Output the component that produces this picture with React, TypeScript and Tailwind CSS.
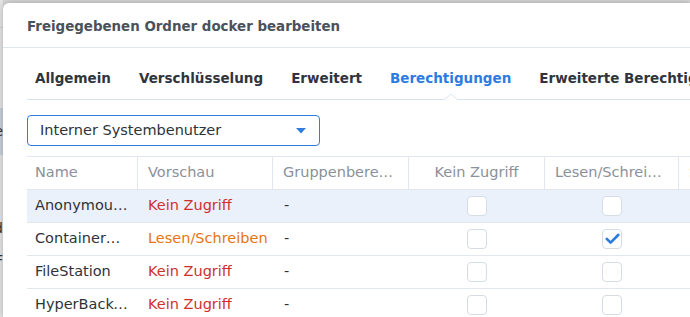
import React from 'react';

const rows = [
  { name: 'AnonymousWebUser', preview: 'Kein Zugriff', tone: 'red', none: false, rw: false, active: true },
  { name: 'ContainerManager', preview: 'Lesen/Schreiben', tone: 'orange', none: false, rw: true, active: false },
  { name: 'FileStation', preview: 'Kein Zugriff', tone: 'red', none: false, rw: false, active: false },
  { name: 'HyperBackupVault', preview: 'Kein Zugriff', tone: 'red', none: false, rw: false, active: false },
];

const tabs = ['Allgemein', 'Verschlüsselung', 'Erweitert', 'Berechtigungen', 'Erweiterte Berechtigungen'];

function Checkbox({ checked }: { checked: boolean }) {
  return (
    <div className="w-[20px] h-[20px] rounded-[4px] border border-[#d5dce5] bg-white flex items-center justify-center">
      {checked && (
        <svg width="15" height="12" viewBox="0 0 15 12">
          <path d="M1.8 5.8 L5.6 9.6 L13.2 2" fill="none" stroke="#2a7ae2" strokeWidth="2.6" strokeLinecap="round" strokeLinejoin="round" />
        </svg>
      )}
    </div>
  );
}

export default function App() {
  return (
    <div className="w-[690px] h-[317px] overflow-hidden flex bg-[#d6d6d6] font-['DejaVu_Sans',sans-serif]">
      {/* window behind the dialog */}
      <div className="w-[3px] shrink-0 flex flex-col bg-[#e4e4e4] text-[14px] text-[#333] overflow-hidden">
        <div className="h-[28px] border-b border-[#cfcfcf]" />
        <div className="h-[80px]" />
        <div className="h-[47px] bg-[#c9d0da] flex items-center justify-end">e</div>
        <div className="h-[58px]" />
        <div className="h-[30px] flex items-center justify-end">d</div>
        <div className="h-[34px] flex items-center justify-end">F</div>
      </div>

      <div className="flex-1 mt-[3px] bg-white rounded-tl-[6px] shadow-[0_0_6px_rgba(0,0,0,0.25)] flex flex-col min-w-0">
        <div className="h-[45px] shrink-0 pl-[24px] pt-[5px] flex items-center border-b border-[#dfe6ef] text-[13.4px] font-bold text-[#4b515a] whitespace-nowrap">
          Freigegebenen Ordner docker bearbeiten
        </div>

        <div className="pl-[24px] flex flex-col min-w-0">
          <div className="flex gap-[28px] pl-[8px] pt-[22px] pb-[13px] border-b border-[#dbe3ec] whitespace-nowrap text-[13.5px] font-bold leading-[16px]">
            {tabs.map((t) => (
              <div key={t} className={`relative ${t === 'Berechtigungen' ? 'text-[#2d7be2]' : 'text-[#2f353d]'}`}>
                {t}
                {t === 'Berechtigungen' && (
                  <svg className="absolute left-1/2 -translate-x-1/2 top-[24px]" width="14" height="6" viewBox="0 0 14 6">
                    <path d="M0 6 L7 0 L14 6" fill="white" stroke="#dbe3ec" strokeWidth="1" />
                  </svg>
                )}
              </div>
            ))}
          </div>

          <div className="mt-[15px] w-[293px] h-[31px] rounded-[4px] border border-[#2f7de1] flex items-center justify-between pl-[12px] pr-[13px] text-[14.5px] text-[#2e3338]">
            <span>Interner Systembenutzer</span>
            <svg width="10" height="6" viewBox="0 0 10 6">
              <path d="M0 0 H10 L5 5.5 Z" fill="#2f7de1" />
            </svg>
          </div>

          <div className="mt-[10px] border-t border-[#e1e7ee] text-[14.5px]">
            <div className="grid grid-cols-[111px_135px_136px_136px_134px_134px] h-[33px] border-b border-[#e1e7ee] text-[#8a919a]">
              <div className="flex items-center pl-[8px] border-r border-[#e1e7ee]">Name</div>
              <div className="flex items-center pl-[10px] border-r border-[#e1e7ee]">Vorschau</div>
              <div className="flex items-center px-[10px] border-r border-[#e1e7ee] min-w-0"><span className="truncate">Gruppenberechtigungen</span></div>
              <div className="flex items-center justify-center px-[10px] border-r border-[#e1e7ee]">Kein Zugriff</div>
              <div className="flex items-center justify-center px-[10px] border-r border-[#e1e7ee] min-w-0"><span className="truncate">Lesen/Schreiben</span></div>
              <div className="flex items-center px-[10px] min-w-0"><span className="truncate">Schreibgeschützt</span></div>
            </div>

            {rows.map((r) => (
              <div
                key={r.name}
                className={`grid grid-cols-[111px_135px_136px_136px_134px_134px] h-[33px] border-b border-[#e1e7ee] ${r.active ? 'bg-[#eaf1fb]' : 'bg-white'}`}
              >
                <div className="flex items-center pl-[8px] pr-[8px] min-w-0 text-[#2e3338]"><span className="truncate">{r.name}</span></div>
                <div className={`flex items-center pl-[10px] whitespace-nowrap ${r.tone === 'red' ? 'text-[#d0302c]' : 'text-[#e6750e]'}`}>{r.preview}</div>
                <div className="flex items-center pl-[11px] text-[#2e3338]">-</div>
                <div className="flex items-center justify-center"><Checkbox checked={r.none} /></div>
                <div className="flex items-center justify-center"><Checkbox checked={r.rw} /></div>
                <div className="flex items-center justify-center"><Checkbox checked={false} /></div>
              </div>
            ))}
          </div>
        </div>
      </div>
    </div>
  );
}
